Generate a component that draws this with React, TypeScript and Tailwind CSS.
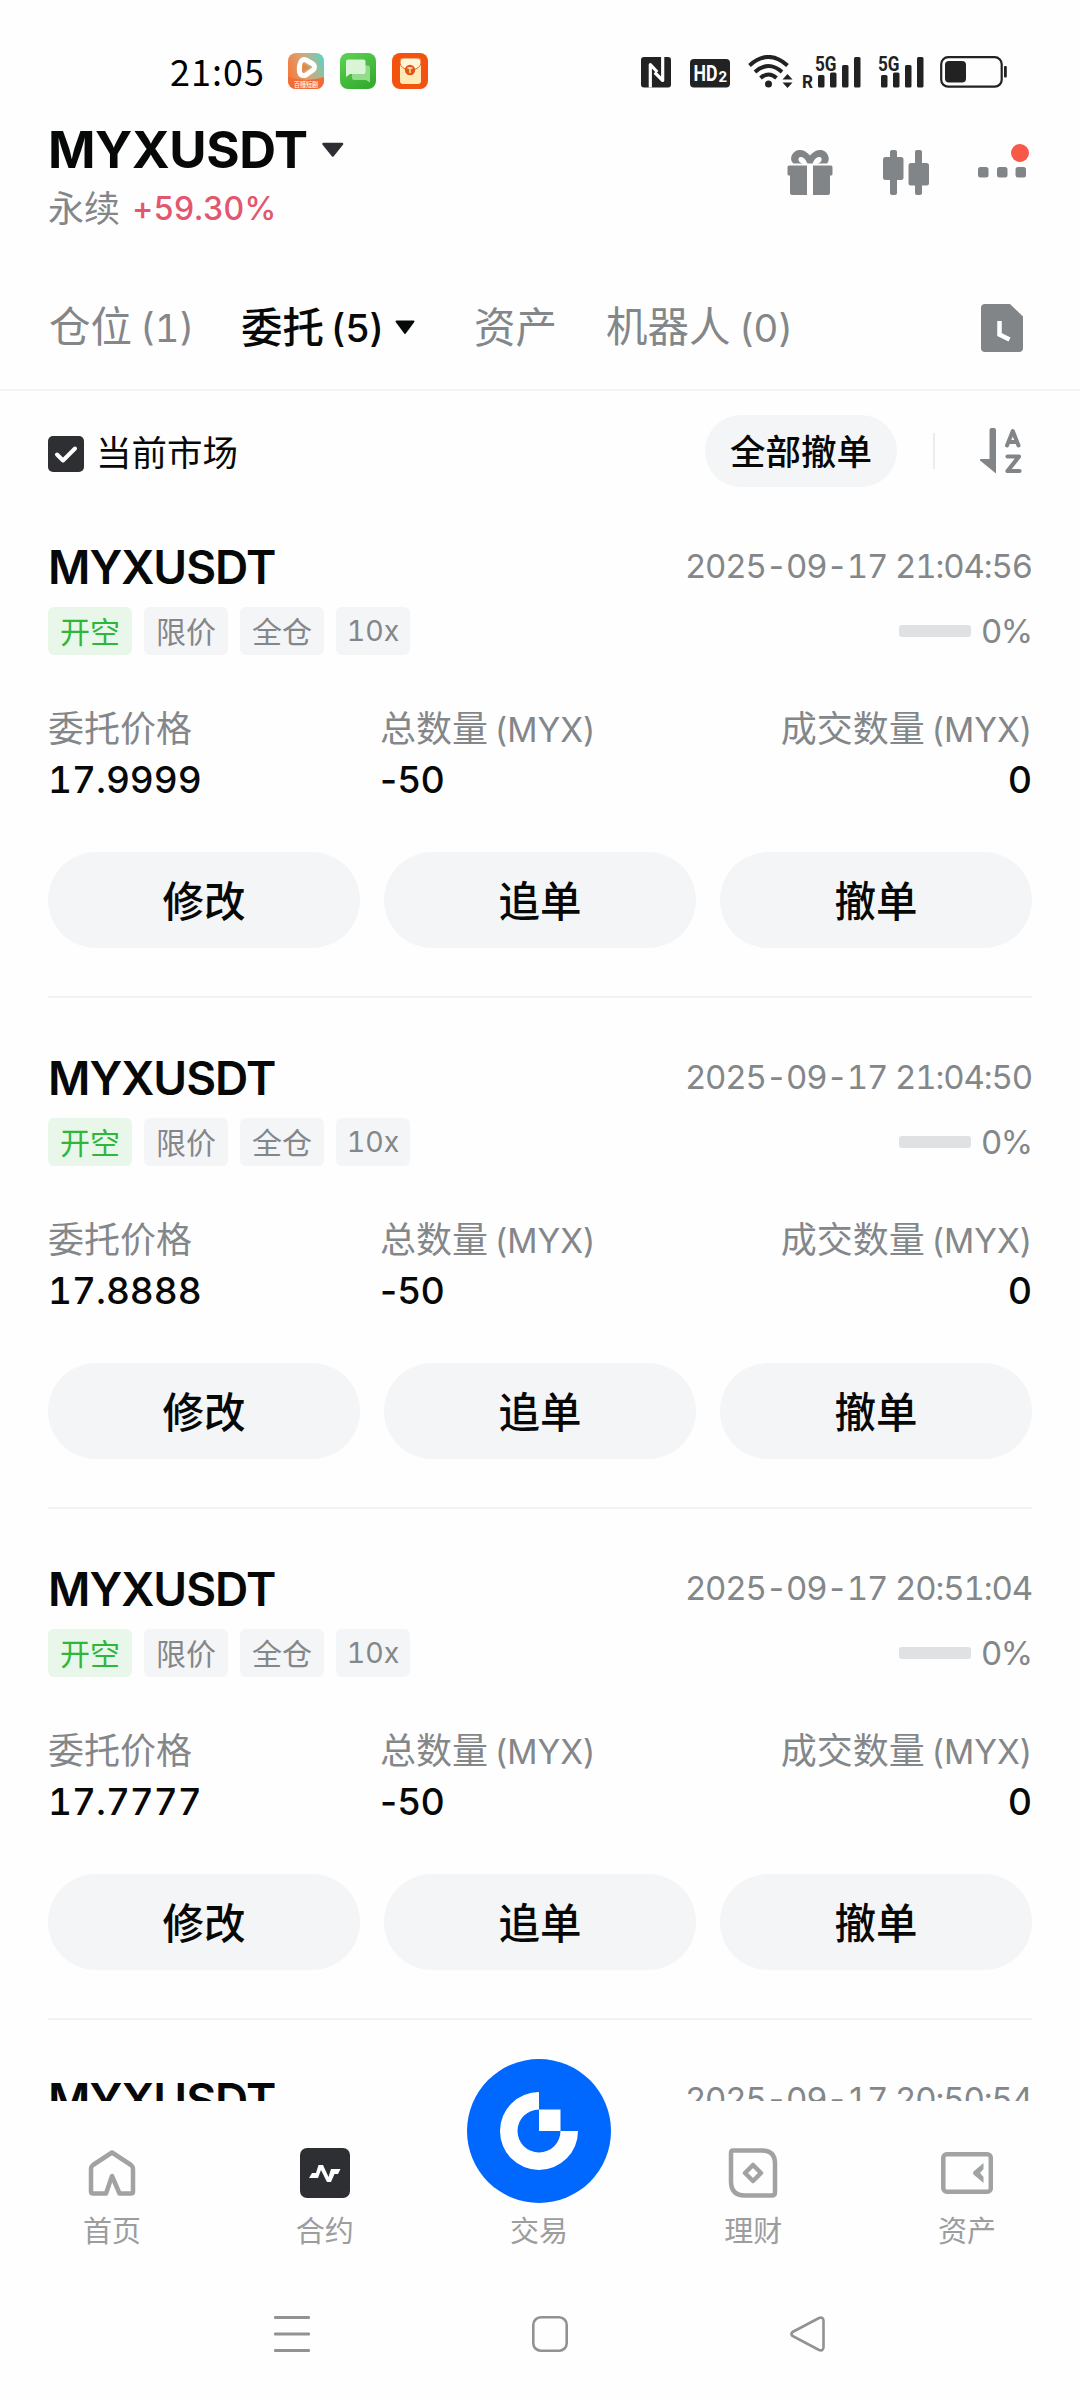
import { useState } from "react";

interface Order {
  id: number;
  symbol: string;
  time: string;
  price: string;
  amount: string;
  filled: string;
  percent: number;
}

const orders: Order[] = [
  { id: 1, symbol: "MYXUSDT", time: "2025-09-17 21:04:56", price: "17.9999", amount: "-50", filled: "0", percent: 0 },
  { id: 2, symbol: "MYXUSDT", time: "2025-09-17 21:04:50", price: "17.8888", amount: "-50", filled: "0", percent: 0 },
  { id: 3, symbol: "MYXUSDT", time: "2025-09-17 20:51:04", price: "17.7777", amount: "-50", filled: "0", percent: 0 },
];

function SignalBars() {
  return (
    <svg className="overflow-visible" width="46" height="34" viewBox="0 0 46 34" fill="#222">
      <text x="0" y="16" fontSize="20" fontWeight="700" textLength="21.500" lengthAdjust="spacingAndGlyphs" fontFamily="Roboto, sans-serif">5G</text>
      <rect x="3" y="20" width="6.500" height="12.500" rx="1.500" />
      <rect x="15" y="17.500" width="6.500" height="15" rx="1.500" />
      <rect x="27" y="10" width="6.500" height="22.500" rx="1.500" />
      <rect x="39" y="2" width="6.500" height="30.500" rx="1.500" />
    </svg>
  );
}

function StatusBar() {
  return (
    <div className="flex h-[120px] items-start pl-[170px] pr-[72px] pt-[53px]">
      <span className="mt-[-2px] w-[118px] font-['Noto_Sans_CJK_SC',sans-serif] text-[36px] leading-[38px] tracking-[1px] text-black">21:05</span>
      <div className="flex gap-4">
        <svg width="36" height="36" viewBox="0 0 36 36">
          <defs>
            <linearGradient id="video" x1="0" y1="0.6" x2="1" y2="0.2">
              <stop offset="0" stopColor="#f47a3c" />
              <stop offset="0.5" stopColor="#d9a574" />
              <stop offset="1" stopColor="#5fd3c0" />
            </linearGradient>
            <clipPath id="videoClip"><rect width="36" height="36" rx="8" /></clipPath>
          </defs>
          <g clipPath="url(#videoClip)">
            <rect width="36" height="36" fill="url(#video)" />
            <path d="M0 24q18 6 36 0v12H0z" fill="#f26a35" />
          </g>
          <path d="M13 8.500c1-2 3-2.500 5-1.500l7 4c2 1.500 2 4.500 0 6l-7 5c-3 1.500-6 0-6.500-3-.5-4 0-7.500 1.500-10.500z" fill="none" stroke="#fff" strokeWidth="5" strokeLinejoin="round" />
          <path d="M14.500 10l7.500 4.500-7.500 4.500z" fill="#e08a4a" />
          <text x="6" y="33.500" fontSize="7" fontWeight="700" fill="#ffe2c8" textLength="24" lengthAdjust="spacingAndGlyphs" fontFamily="Noto Sans CJK SC, sans-serif">百赚短剧</text>
        </svg>
        <svg width="36" height="36" viewBox="0 0 36 36">
          <defs>
            <linearGradient id="chat" x1="0" y1="0" x2="0.6" y2="1">
              <stop offset="0" stopColor="#5fd455" />
              <stop offset="1" stopColor="#36ad30" />
            </linearGradient>
          </defs>
          <rect width="36" height="36" rx="8" fill="url(#chat)" />
          <path d="M14 12.500h14q2 0 2 2V29.500l-4-2.500H14q-2 0-2-2V14.500q0-2 2-2z" fill="#93dc8c" />
          <path d="M8 6.500h15.500q2 0 2 2V19q0 2-2 2H10l-4 3V8.500q0-2 2-2z" fill="#d9f5d6" />
        </svg>
        <svg width="36" height="36" viewBox="0 0 36 36">
          <rect width="36" height="36" rx="8" fill="#f4520f" />
          <rect x="8" y="5" width="21" height="26" rx="3" fill="#ffe9b5" />
          <path d="M8 10q0-5 4-5h13q4 0 4 5-1 6-10.500 7.500Q9 16 8 10z" fill="#fff5dd" stroke="#e8641c" strokeWidth="1" />
          <circle cx="18" cy="17" r="5.200" fill="#e0571a" />
          <path d="M15.500 15h5M18 15v5" stroke="#ffe9b5" strokeWidth="1.300" />
        </svg>
      </div>
      <div className="ml-auto flex items-start pt-[2px]">
        <svg className="mr-[19px]" width="30" height="34" viewBox="0 0 30 34">
          <rect y="2" width="30" height="30.500" rx="3" fill="#222" />
          <path d="M9.300 32.500V9.500l7 7.500M21.700 2v23.500l-8-8" fill="none" stroke="#fff" strokeWidth="3.200" strokeLinejoin="round" />
        </svg>
        <svg className="mr-[18px]" width="40" height="34" viewBox="0 0 40 34">
          <rect y="4" width="40" height="28.500" rx="4" fill="#222" />
          <text x="3.500" y="26" fontSize="22" fontWeight="700" fill="#fff" textLength="24" lengthAdjust="spacingAndGlyphs" fontFamily="Roboto, sans-serif">HD</text>
          <text x="28.500" y="26.500" fontSize="15" fontWeight="700" fill="#fff" fontFamily="Roboto, sans-serif">2</text>
        </svg>
        <svg width="45" height="36" viewBox="0 0 45 36">
          <g fill="none" stroke="#222" strokeWidth="4">
            <path d="M1.500 10.500q19-17 38 0" />
            <path d="M7 17q13.500-12 27 0" />
            <path d="M12.500 23q8-7 16 0" />
          </g>
          <circle cx="20.500" cy="29" r="3.500" fill="#222" />
          <path d="M34.500 24.500l5-5.500 5 5.500zM34.500 27.500l5 5.500 5-5.500z" fill="#222" />
        </svg>
        <svg className="ml-[9px]" width="13" height="36" viewBox="0 0 13 36">
          <text x="0" y="33" fontSize="18" fontWeight="700" fill="#222" textLength="11" lengthAdjust="spacingAndGlyphs" fontFamily="Roboto, sans-serif">R</text>
        </svg>
        <SignalBars />
        <span className="w-[17px]" />
        <SignalBars />
        <svg className="ml-[16px]" width="68" height="34" viewBox="0 0 68 34">
          <rect x="1.200" y="2.200" width="60.500" height="29.500" rx="7" fill="none" stroke="#222" strokeWidth="2.200" />
          <rect x="5" y="6" width="21" height="21.500" rx="4" fill="#222" />
          <rect x="64" y="11" width="2.800" height="11.500" rx="1" fill="#222" />
        </svg>
      </div>
    </div>
  );
}

function Header() {
  return (
    <div className="flex h-[126px] justify-between pl-12 pr-[48px]">
      <div>
        <div className="flex h-[60px] items-center">
          <h1 className="text-[51px] font-bold leading-[60px] tracking-[-0.4px] text-[#070808]">MYXUSDT</h1>
          <svg className="ml-[13px]" width="24" height="16" viewBox="0 0 24 16">
            <path d="M2.500 2h18.500L11.800 13.500z" fill="#2e2f33" stroke="#2e2f33" strokeWidth="2.500" strokeLinejoin="round" />
          </svg>
        </div>
        <div className="flex h-[58px] items-center">
          <span className="text-[36px] text-[#84878a]">永续</span>
          <span className="ml-[12px] text-[32px] font-medium tracking-[0.4px] text-[#e3566d]">+59.30%</span>
        </div>
      </div>
      <div className="flex items-start pt-[24px]">
        <svg className="mt-[6px]" width="46" height="46" viewBox="0 0 46 46" fill="#828587">
          <path d="M6.500 13.500C1 9 6 0 12.500 0c4.500 0 7.500 2 10.500 5.500C26 2 29 0 33.500 0 40 0 44.500 9 40 13.500h-9.500c5-.5 5.500-7 1.500-6.500-3.500.5-5 3.500-6.500 6.500h-5C19 10.500 17.500 7.500 14 7c-4-.5-3 6 1.500 6.500z" />
          <path d="M2 15.500h18V45H5q-2 0-2-2V25.500H2q-1.500 0-1.500-1.500v-6.500q0-2 1.500-2z" />
          <path d="M44 15.500H26V45h15q2 0 2-2V25.500h1q1.500 0 1.500-1.500v-6.500q0-2-1.500-2z" />
        </svg>
        <svg className="ml-[50px] mt-[6px]" width="46" height="46" viewBox="0 0 46 46" fill="#828587">
          <rect x="7" y="0" width="7" height="45" rx="2" />
          <rect x="0" y="7" width="20.500" height="23" rx="2.500" />
          <rect x="32" y="0" width="7" height="45" rx="2" />
          <rect x="25.500" y="13" width="20.500" height="22.500" rx="2.500" />
        </svg>
        <svg className="ml-[49px]" width="54" height="36" viewBox="0 0 54 36" fill="#828587">
          <rect x="0" y="23" width="10.500" height="10.500" rx="2.500" />
          <rect x="19" y="23" width="10.500" height="10.500" rx="2.500" />
          <rect x="37.500" y="23" width="10.500" height="10.500" rx="2.500" />
          <circle cx="42" cy="9" r="9" fill="#f75848" />
        </svg>
      </div>
    </div>
  );
}

function Tabs() {
  return (
    <div className="flex h-[145px] items-center border-b-2 border-[#f3f4f5] pl-[49px] pt-[20px] text-[41.500px] leading-[48px] text-[#84878a]">
      <div className="flex w-[192px] items-baseline">
        仓位<span className="ml-[8px] text-[38px] tabular-nums">(1)</span>
      </div>
      <div className="flex w-[233px] items-center font-medium text-[#070808]">
        委托<span className="ml-[7px] text-[38.500px] tracking-[0.3px]">(5)</span>
        <svg className="ml-[11px]" width="20" height="15" viewBox="0 0 20 15">
          <path d="M1.500 1.500h17L10 13z" fill="#070808" stroke="#070808" strokeWidth="2" strokeLinejoin="round" />
        </svg>
      </div>
      <div className="w-[132px]">资产</div>
      <div className="flex items-baseline">
        机器人<span className="ml-[9px] text-[38.500px] tracking-[0.3px]">(0)</span>
      </div>
      <svg className="ml-auto mr-[57px]" width="42" height="48" viewBox="0 0 42 48">
        <path d="M4 0h25l13 12.500V44q0 4-4 4H4q-4 0-4-4V4q0-4 4-4z" fill="#828587" />
        <path d="M18.500 17v13.500l10 5" fill="none" stroke="#fff" strokeWidth="4.500" />
      </svg>
    </div>
  );
}

function FilterRow() {
  const [checked, setChecked] = useState(true);

  return (
    <div className="flex h-24 items-center pl-12 pr-[58px] pt-6">
      <button type="button" className="flex items-center" onClick={() => setChecked(!checked)}>
        <svg className="mt-[5px]" width="36" height="36" viewBox="0 0 36 36">
          <rect width="36" height="36" rx="5" fill="#2e2f33" />
          {checked && <path d="M9 18.500l6 6L27 12.500" fill="none" stroke="#fff" strokeWidth="4" strokeLinecap="round" strokeLinejoin="round" />}
        </svg>
        <span className="ml-[12px] mt-[5px] text-[35.500px] leading-[44px] text-[#070808]">当前市场</span>
      </button>
      <button type="button" className="ml-auto h-[72px] w-[192px] rounded-full bg-[#f4f5f7] pt-[4px] text-[35.500px] font-medium leading-[44px] text-[#070808]">
        全部撤单
      </button>
      <span className="ml-[36px] h-9 w-[2px] bg-[#ececee]" />
      <svg className="ml-[45px]" width="42" height="46" viewBox="0 0 42 46" fill="#828587">
        <path d="M9.500 2q0-2 2-2H14q2 0 2 2v43.500L0 32.500q-.5-1.500 1-1.500h8.500z" />
        <path d="M27 17.500L32.800 3l5.700 14.500M29 14h8" fill="none" stroke="#828587" strokeWidth="4" strokeLinecap="round" strokeLinejoin="round" />
        <path d="M27.500 28.500h11.500L27.500 43h12" fill="none" stroke="#828587" strokeWidth="4.200" strokeLinecap="round" strokeLinejoin="round" />
      </svg>
    </div>
  );
}

const tagClass = "flex h-12 items-center rounded-[6px] bg-[#f4f5f7] px-3 pt-[2px] text-[#84878a]";
const actionClass = "h-24 rounded-full bg-[#f4f5f7] pt-[4px] text-[41.500px] font-medium text-[#070808]";

function OrderTitle({ symbol, time }: { symbol: string; time: string }) {
  return (
    <div className="flex h-14 items-center justify-between">
      <h2 className="text-[46px] font-semibold leading-[56px] tracking-[-1px] text-[#070808]">{symbol}</h2>
      <span className="text-[33px] tabular-nums tracking-[-1.150px] text-[#84878a]">{time}</span>
    </div>
  );
}

function OrderItem({ order }: { order: Order }) {
  return (
    <div className="mx-12 h-[511px] shrink-0 border-b-2 border-[#f1f2f3] pt-[52px]">
      <OrderTitle symbol={order.symbol} time={order.time} />
      <div className="mt-3 flex h-12 items-center gap-3 text-[30px]">
        <span className="flex h-12 items-center rounded-[6px] bg-[#e9f7ea] px-3 pt-[2px] text-[#2eb73a]">开空</span>
        <span className={tagClass}>限价</span>
        <span className={tagClass}>全仓</span>
        <span className="flex h-12 w-[74px] items-center justify-center rounded-[6px] bg-[#f4f5f7] text-[28.500px] tabular-nums text-[#84878a]">10x</span>
        <div className="ml-auto flex items-center">
          <div className="h-3 w-[72px] overflow-hidden rounded-[3px] bg-[#dfe1e2]">
            <div className="h-full bg-[#84878a]" style={{ width: `${order.percent}%` }} />
          </div>
          <span className="ml-[10px] mt-[2px] text-[33px] tracking-[-1.200px] text-[#84878a]">{order.percent}%</span>
        </div>
      </div>
      <div className="mt-[52px] grid h-[44px] grid-cols-[332px_1fr_auto] text-[36px] leading-[44px] text-[#84878a]">
        <span>委托价格</span>
        <span>总数量<span className="ml-[7px] text-[33.500px]">(MYX)</span></span>
        <span>成交数量<span className="ml-[7px] text-[33.500px]">(MYX)</span></span>
      </div>
      <div className="mt-[7px] grid grid-cols-[332px_1fr_auto] text-[37px] font-medium leading-[44px] text-[#070808]">
        <span className="tabular-nums">{order.price}</span>
        <span className="tracking-[0.4px]">{order.amount}</span>
        <span>{order.filled}</span>
      </div>
      <div className="mt-[50px] grid grid-cols-3 gap-6">
        <button type="button" className={actionClass}>修改</button>
        <button type="button" className={actionClass}>追单</button>
        <button type="button" className={actionClass}>撤单</button>
      </div>
    </div>
  );
}

function BottomNav() {
  return (
    <nav className="grid h-[165px] grid-cols-5 pl-[5px] pr-[6px] text-center text-[29px] leading-[40px] text-[#9b9d9f]">
      <div className="flex flex-col items-center pt-[47px]">
        <svg width="50" height="50" viewBox="0 0 50 50">
          <path d="M25 4.500L44 17q2 1.500 2 4v23q0 1.500-2 1.500H32.500L25 28l-6 17.500H6q-2 0-2-2V21q0-2.500 2-4z" fill="none" stroke="#a0a2a3" strokeWidth="4.500" strokeLinejoin="round" />
        </svg>
        <span className="mt-[14px]">首页</span>
      </div>
      <div className="flex flex-col items-center pr-[2px] pt-[47px]">
        <svg width="50" height="50" viewBox="0 0 50 50">
          <rect width="50" height="50" rx="7" fill="#2e2f33" />
          <path d="M12 25h4l2.500-8H23l5.500 12 2.500-8h9.500l-2.500 5h-3.500l-3.500 8h-4l-6-12-3 8H9z" fill="#fff" />
        </svg>
        <span className="mt-[14px]">合约</span>
      </div>
      <div className="relative pr-[1px] pt-[111px]">
        <svg className="absolute left-1/2 top-[-42px] -translate-x-1/2" width="144" height="144" viewBox="0 0 144 144">
          <circle cx="72" cy="72" r="72" fill="#0068ff" />
          <path d="M72 33a39 39 0 1 0 39 39H93.500a21.500 21.500 0 1 1-21.500-21.500z" fill="#fff" />
          <rect x="72" y="50.500" width="21.500" height="21.500" fill="#fff" />
        </svg>
        <span>交易</span>
      </div>
      <div className="flex flex-col items-center pt-[47px]">
        <svg width="50" height="50" viewBox="0 0 50 50" fill="none" stroke="#a0a2a3" strokeWidth="4.500">
          <path d="M5 2.500h29q13 0 13 13V44q0 3.500-3 3.500H17q-14 0-14-14V5q0-2.500 2-2.500z" />
          <path d="M25 17l8 8-8 8-8-8z" strokeLinejoin="round" />
        </svg>
        <span className="mt-[14px]">理财</span>
      </div>
      <div className="flex flex-col items-center pt-[47px]">
        <svg width="52" height="50" viewBox="0 0 52 50">
          <rect x="2.300" y="6.300" width="47.500" height="37.500" rx="3.500" fill="none" stroke="#a0a2a3" strokeWidth="4.500" />
          <path d="M42.500 15v6L39 25l3.500 4v6L32.500 26.500q-1-1.500 0-3z" fill="#a0a2a3" />
        </svg>
        <span className="mt-[14px]">资产</span>
      </div>
    </nav>
  );
}

function SystemNav() {
  return (
    <div className="flex flex-1 items-start pl-[274px] pt-[50px]">
      <svg width="36" height="36" viewBox="0 0 36 36" fill="#929292">
        <rect y="0" width="36" height="3" rx="1" />
        <rect y="16.500" width="36" height="3" rx="1" />
        <rect y="33" width="36" height="3" rx="1" />
      </svg>
      <svg className="ml-[222px]" width="36" height="36" viewBox="0 0 36 36">
        <rect x="1.300" y="1.300" width="33.400" height="33.400" rx="7.500" fill="none" stroke="#929292" strokeWidth="2.600" />
      </svg>
      <svg className="ml-[222px]" width="36" height="36" viewBox="0 0 36 36">
        <path d="M2.500 16L29 2q4.500-1.500 4.500 3v26q0 4.500-4.500 3L2.500 20q-2-2 0-4z" fill="none" stroke="#929292" strokeWidth="2.600" />
      </svg>
    </div>
  );
}

export default function App() {
  return (
    <div className="flex h-[2400px] w-[1080px] flex-col overflow-hidden bg-[#fefefe] font-[Inter,'Noto_Sans_CJK_SC',sans-serif]">
      <StatusBar />
      <Header />
      <Tabs />
      <div className="flex h-[1710px] flex-col overflow-hidden">
        <FilterRow />
        {orders.map((order) => (
          <OrderItem key={order.id} order={order} />
        ))}
        {/* next order, scrolled under the bottom nav */}
        <div className="mx-12 shrink-0 pt-[52px]">
          <OrderTitle symbol="MYXUSDT" time="2025-09-17 20:50:54" />
        </div>
      </div>
      <BottomNav />
      <SystemNav />
    </div>
  );
}
